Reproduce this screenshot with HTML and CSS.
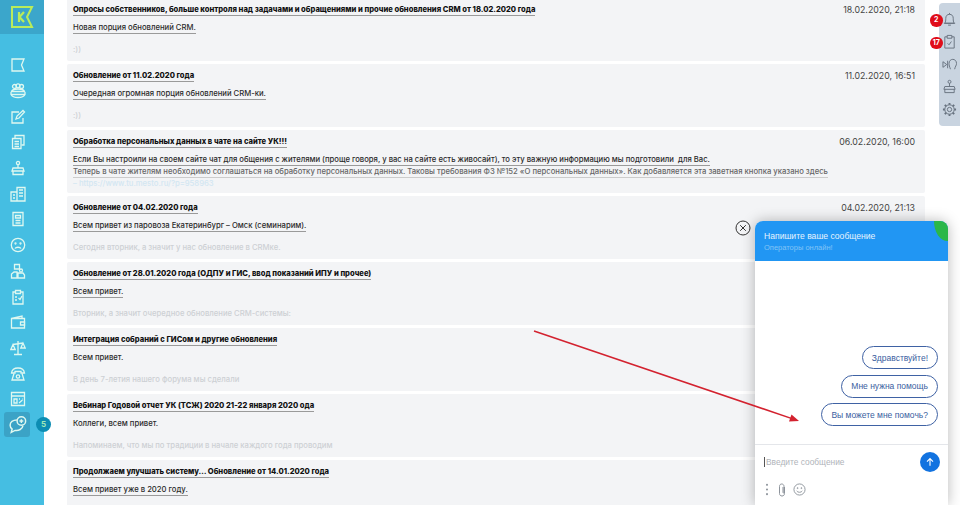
FILE: index.html
```html
<!DOCTYPE html>
<html lang="ru">
<head>
    <meta charset="UTF-8">
    <title>Обновления CRM</title>
    <link rel="stylesheet" href="styles.css">
</head>
<body>
    <nav class="sidebar">
        <div class="logo">
            <svg width="24" height="24" viewBox="0 0 24 24" fill="none" stroke="#b9ec5a" stroke-width="2"><path d="M2 2H22L17 12L22 22H2Z"/><path d="M9 7V17M14 7L9.5 12L14 17" stroke-width="2.2"/></svg>
        </div>
        <div class="menu">
            <a class="menu-item"><svg viewBox="0 0 16 16"><path d="M2 2H14L11.5 8L14 14H2Z"/></svg></a>
            <a class="menu-item"><svg viewBox="0 0 16 16"><circle cx="4.5" cy="3.5" r="2"/><circle cx="11.5" cy="3.5" r="2"/><circle cx="8" cy="2.8" r="2"/><path d="M1.5 8.5C2 6.5 4 6 8 6S14 6.5 14.5 8.5ZM1 9V11.5C3 15.5 13 15.5 15 11.5V9M1 11.5H15"/></svg></a>
            <a class="menu-item"><svg viewBox="0 0 16 16"><path d="M13 9V14H2V3H9"/><path d="M6 10L7 7L13 1.5L14.5 3L9 9Z"/></svg></a>
            <a class="menu-item"><svg viewBox="0 0 16 16"><path d="M5 4V1.5H14V11H11.5"/><path d="M2.5 4.5H11V14.5H2.5Z"/><path d="M4.5 7.5H9M4.5 10H9M4.5 12.5H9"/></svg></a>
            <a class="menu-item"><svg viewBox="0 0 16 16"><circle cx="8" cy="3" r="1.6"/><path d="M8 4.5V8M3 8H13L14 11H2ZM3 11V14.5H13V11"/></svg></a>
            <a class="menu-item"><svg viewBox="0 0 16 16"><path d="M7 1.5H15V15H7ZM1 6H7V15H1Z"/><path d="M9 4H13M9 7H13M9 10H13M3 9H5M3 12H5"/></svg></a>
            <a class="menu-item"><svg viewBox="0 0 16 16"><path d="M3 1.5H13V14.5H3Z"/><path d="M5.5 4.5H10.5V7H5.5ZM5.5 9.5H10.5M5.5 12H10.5"/></svg></a>
            <a class="menu-item"><svg viewBox="0 0 16 16"><circle cx="8" cy="8" r="6.7"/><circle cx="5.5" cy="6.5" r=".5"/><circle cx="10.5" cy="6.5" r=".5"/><path d="M5 11.5C6 9.8 10 9.8 11 11.5"/></svg></a>
            <a class="menu-item"><svg viewBox="0 0 16 16"><path d="M4.5 1.5H9.5V6H4.5ZM1.5 15V11L4 9H7V15ZM8 15V10H13L14.5 12V15Z"/><circle cx="11" cy="7.5" r="1.5"/></svg></a>
            <a class="menu-item"><svg viewBox="0 0 16 16"><path d="M5.5 3H3V15H13V3H10.5"/><path d="M5.5 1.5H10.5V4.5H5.5Z"/><path d="M8.5 9L10 10.5L12 7M5 8H7M5 11H7"/></svg></a>
            <a class="menu-item"><svg viewBox="0 0 16 16"><path d="M1.5 4.5L12 2V4.5M1.5 4.5H14.5V14H1.5Z"/><path d="M10.5 8H14.5V11H10.5Z"/></svg></a>
            <a class="menu-item"><svg viewBox="0 0 16 16"><path d="M8 1V14M4 14.5H12M3 4.5L13 3M3 4.5L.8 9.5H5.2ZM13 3L10.8 8H15.2Z"/></svg></a>
            <a class="menu-item"><svg viewBox="0 0 16 16"><path d="M1.5 7C2 3 5 2 8 2S14 3 14.5 7H11V5.5H5V7Z"/><path d="M4 7.5L2 14H14L12 7.5"/><circle cx="8" cy="10.5" r="1.7"/></svg></a>
            <a class="menu-item"><svg viewBox="0 0 16 16"><path d="M1.5 1.5H14.5V14.5H1.5ZM1.5 5H14.5"/><path d="M4 8H7V12H4ZM9 8H10M12 8H12.5M9 12L12.5 9"/></svg></a>
            <a class="menu-item active">
                <svg viewBox="0 0 16 16"><path d="M7 3.5C3.5 3.5 1 5.5 1 8.2C1 9.6 1.7 10.8 2.8 11.6L2 14.5L5.4 12.8C8.5 13.4 12 11.5 12.4 8.5"/><circle cx="11" cy="4.5" r="3.8"/><path d="M11 2.8V6.2M9.3 4.5H12.7"/></svg>
                <span class="menu-badge">5</span>
            </a>
        </div>
    </nav>

    <main class="news">
        <article class="card">
            <div class="card-head"><h2><span>Опросы собственников, больше контроля над задачами и обращениями и прочие обновления CRM от 18.02.2020 года</span></h2><time>18.02.2020, 21:18</time></div>
            <p><span>Новая порция обновлений CRM.</span></p>
            <p class="faded spaced">:))</p>
        </article>
        <article class="card">
            <div class="card-head"><h2><span>Обновление от 11.02.2020 года</span></h2><time>11.02.2020, 16:51</time></div>
            <p><span>Очередная огромная порция обновлений CRM-ки.</span></p>
            <p class="faded spaced">:))</p>
        </article>
        <article class="card">
            <div class="card-head"><h2><span>Обработка персональных данных в чате на сайте УК!!!</span></h2><time>06.02.2020, 16:00</time></div>
            <p><span>Если Вы настроили на своем сайте чат для общения с жителями (проще говоря, у вас на сайте есть живосайт), то эту важную информацию мы подготовили &nbsp;для Вас.</span></p>
            <p class="second"><span>Теперь в чате жителям необходимо соглашаться на обработку персональных данных. Таковы требования ФЗ №152 «О персональных данных». Как добавляется эта заветная кнопка указано здесь</span></p>
            <p class="link">– https://www.tu.mesto.ru/?p=958963</p>
        </article>
        <article class="card">
            <div class="card-head"><h2><span>Обновление от 04.02.2020 года</span></h2><time>04.02.2020, 21:13</time></div>
            <p><span>Всем привет из паровоза Екатеринбург – Омск (семинарим).</span></p>
            <p class="faded spaced">Сегодня вторник, а значит у нас обновление в CRMке.</p>
        </article>
        <article class="card">
            <div class="card-head"><h2><span>Обновление от 28.01.2020 года (ОДПУ и ГИС, ввод показаний ИПУ и прочее)</span></h2></div>
            <p><span>Всем привет.</span></p>
            <p class="faded spaced">Вторник, а значит очередное обновление CRM-системы:</p>
        </article>
        <article class="card">
            <div class="card-head"><h2><span>Интеграция собраний с ГИСом и другие обновления</span></h2></div>
            <p>Всем привет.</p>
            <p class="faded spaced">В день 7-летия нашего форума мы сделали</p>
        </article>
        <article class="card">
            <div class="card-head"><h2><span>Вебинар Годовой отчет УК (ТСЖ) 2020 21-22 января 2020 ода</span></h2></div>
            <p>Коллеги, всем привет.</p>
            <p class="faded spaced">Напоминаем, что мы по традиции в начале каждого года проводим</p>
        </article>
        <article class="card">
            <div class="card-head"><h2><span>Продолжаем улучшать систему… Обновление от 14.01.2020 года</span></h2></div>
            <p><span>Всем привет уже в 2020 году.</span></p>
        </article>
    </main>

    <aside class="tools">
        <a class="tool"><svg viewBox="0 0 16 16"><path d="M3 12C4 10.5 4 9 4 7C4 4 5.5 2.5 8 2.5S12 4 12 7C12 9 12 10.5 13 12ZM2 12H14M6.5 14H9.5M8 1V2.5"/></svg><b class="tool-badge">2</b></a>
        <a class="tool"><svg viewBox="0 0 16 16"><path d="M5.5 3H3V15H13V3H10.5"/><path d="M5.5 1.5H10.5V4.5H5.5Z"/><path d="M6 10L7.5 11.5L10 8"/></svg><b class="tool-badge">17</b></a>
        <a class="tool"><svg viewBox="0 0 16 16"><path d="M1 5V11L5 8ZM6 4V12"/><path d="M9 13C8 10 7.5 9 7.5 7C7.5 4 9.5 2.5 11.5 2.5S15.5 4 15.5 7C15.5 9 14 10 13.5 13"/></svg></a>
        <a class="tool"><svg viewBox="0 0 16 16"><circle cx="8" cy="3" r="1.6"/><path d="M8 4.5V8M3 8H13L14 11H2ZM3 11V14.5H13V11"/></svg></a>
        <a class="tool"><svg viewBox="0 0 16 16"><circle cx="8" cy="8" r="2.3"/><circle cx="8" cy="8" r="5"/><path d="M8 1V3M8 13V15M1 8H3M13 8H15M3 3L4.5 4.5M11.5 11.5L13 13M13 3L11.5 4.5M4.5 11.5L3 13" stroke-width="2"/></svg></a>
    </aside>

    <button class="chat-close"><svg viewBox="0 0 16 16"><circle cx="8" cy="8" r="7"/><path d="M5.2 5.2L10.8 10.8M10.8 5.2L5.2 10.8"/></svg></button>

    <section class="chat">
        <header class="chat-head">
            <div class="chat-title">Напишите ваше сообщение</div>
            <div class="chat-status">Операторы онлайн!</div>
        </header>
        <div class="chat-body">
            <button class="reply">Здравствуйте!</button>
            <button class="reply">Мне нужна помощь</button>
            <button class="reply">Вы можете мне помочь?</button>
        </div>
        <div class="chat-input">
            <span class="caret"></span><span class="placeholder">Введите сообщение</span>
            <span class="send"><svg viewBox="0 0 16 16"><path d="M8 13V3.5M4 7.5L8 3.5L12 7.5"/></svg></span>
        </div>
        <div class="chat-actions">
            <svg class="dots" viewBox="0 0 4 14"><circle cx="2" cy="2" r="1.1"/><circle cx="2" cy="7" r="1.1"/><circle cx="2" cy="12" r="1.1"/></svg>
            <svg class="clip" viewBox="0 0 10 14"><path d="M7.5 4V10.5C7.5 12 6.5 13 5 13S2.5 12 2.5 10.5V3.5C2.5 2 3.3 1 4.7 1S7 2 7 3.5V9.5C7 10.3 6 10.3 6 9.5V4"/></svg>
            <svg class="smile" viewBox="0 0 14 14"><circle cx="7" cy="7" r="6"/><circle cx="5" cy="5.5" r=".5"/><circle cx="9" cy="5.5" r=".5"/><path d="M4 8.5C5 10.5 9 10.5 10 8.5"/></svg>
        </div>
    </section>

    <svg class="arrow" viewBox="0 0 960 505"><path d="M534 331L792 418.6"/><path class="arrow-head" d="M799 421L789 421.5L791.5 414.5Z"/></svg>
</body>
</html>
```

FILE: styles.css
```css
html, body {
    height: 100%;
}

body {
    margin: 0;
    display: flex;
    overflow: hidden;
    background-color: #fff;
    font-family: 'Inter', 'Noto Sans', sans-serif;
    color: #222;
}

/* left menu */
.sidebar {
    width: 44px;
    flex: none;
    background-color: #45bee2;
}

.logo {
    height: 34px;
    display: flex;
    align-items: center;
    justify-content: center;
    background-color: #3ba6cb;
}

.menu {
    display: flex;
    flex-direction: column;
    padding-top: 18.5px;
}

.menu-item {
    position: relative;
    height: 25.7px;
    display: flex;
    align-items: center;
    justify-content: center;
    padding-right: 9px;
}

.menu-item svg {
    width: 16px;
    height: 16px;
    fill: none;
    stroke: #dff8f0;
    stroke-width: 1.3;
}

.menu-item.active::before {
    content: "";
    position: absolute;
    left: 4px;
    top: 0;
    width: 26px;
    height: 25px;
    border-radius: 3px;
    background-color: #3ba3c6;
}

.menu-item.active svg {
    position: relative;
    width: 18px;
    height: 18px;
}

.menu-badge {
    position: absolute;
    left: 36px;
    top: 5px;
    width: 15px;
    height: 15px;
    border-radius: 50%;
    background-color: #0c8db3;
    color: #9fe8b8;
    font-size: 8px;
    font-weight: 700;
    line-height: 15px;
    text-align: center;
}

/* news list */
.news {
    width: 858px;
    flex: none;
    margin: -2px 0 0 23px;
    display: flex;
    flex-direction: column;
    gap: 3px;
}

.card {
    height: 63px;
    flex: none;
    box-sizing: border-box;
    padding: 6px 10px 0 6px;
    background-color: #f3f4f6;
    border-radius: 2px;
    overflow: hidden;
    font-size: 7.68px;
    line-height: 12px;
}

.card-head {
    display: flex;
    justify-content: space-between;
    margin-bottom: 6px;
}

.card-head h2 {
    margin: 0;
    font-size: 7.58px;
    line-height: 12px;
    font-weight: 800;
    color: #111;
}

.card-head span, .card p span {
    padding-bottom: 1px;
    border-bottom: 1px solid #9a9a9a;
}

.card-head time {
    font-size: 8.8px;
    color: #444;
}

.card p {
    margin: 0;
    font-weight: 500;
    color: #2b2b2b;
    white-space: nowrap;
}

.card p.second {
    color: #666;
}

.card p.second span {
    border-bottom-color: #ccc;
}

.card p.spaced {
    margin-top: 10px;
}

.card p.faded {
    color: #cdd0d4;
}

.card p.link {
    color: #d2e6f2;
}

/* right tools */
.tools {
    position: absolute;
    right: 0;
    top: 3px;
    width: 21px;
    height: 123px;
    padding-top: 5px;
    box-sizing: border-box;
    background-color: #c9d4e0;
    border-radius: 4px 0 0 4px;
}

.tool {
    position: relative;
    height: 22.5px;
    display: flex;
    align-items: center;
    justify-content: center;
}

.tool svg {
    width: 15px;
    height: 15px;
    fill: none;
    stroke: #66717e;
    stroke-width: 1;
}

.tool-badge {
    position: absolute;
    left: -9px;
    top: 6px;
    width: 12.5px;
    height: 12.5px;
    border-radius: 50%;
    background-color: #e00d1a;
    color: #fff;
    font-size: 7px;
    line-height: 12.5px;
    text-align: center;
}

/* chat widget */
.chat-close {
    position: absolute;
    left: 735px;
    top: 220px;
    width: 16px;
    height: 16px;
    padding: 0;
    border: none;
    background: none;
}

.chat-close svg {
    display: block;
    fill: #f3f4f6;
    stroke: #333;
    stroke-width: 1;
}

.chat {
    position: absolute;
    left: 755px;
    top: 221px;
    bottom: 0;
    width: 193px;
    display: flex;
    flex-direction: column;
    background-color: #fff;
    border-radius: 8px 8px 0 0;
    box-shadow: 0 0 14px rgba(0, 0, 0, 0.28);
    font-family: 'Liberation Sans', sans-serif;
}

.chat-head {
    position: relative;
    height: 40px;
    flex: none;
    box-sizing: border-box;
    padding: 9px 9px 0;
    overflow: hidden;
    background-color: #2196f3;
    border-radius: 8px 8px 0 0;
}

.chat-head::after {
    content: "";
    position: absolute;
    right: -13px;
    top: -20px;
    width: 27px;
    height: 40px;
    border-radius: 50%;
    background-color: #2bb749;
}

.chat-title {
    font-size: 8.6px;
    line-height: 13px;
    color: #e6f3fe;
}

.chat-status {
    font-size: 7.5px;
    line-height: 10px;
    color: #82c4f7;
}

.chat-body {
    flex: 1;
    display: flex;
    flex-direction: column;
    align-items: flex-end;
    justify-content: flex-end;
    gap: 5.5px;
    padding: 0 10px 18px;
}

.reply {
    height: 23px;
    padding: 0 9px;
    background: #fff;
    border: 1px solid #3f62a4;
    border-radius: 12px;
    color: #3a5ea0;
    font-family: inherit;
    font-size: 8.5px;
}

.chat-input {
    height: 33px;
    flex: none;
    display: flex;
    align-items: center;
    padding: 0 8px 0 9px;
    border-top: 1px solid #e4e6ea;
}

.caret {
    width: 1px;
    height: 10px;
    margin-right: 1px;
    background-color: #555;
}

.placeholder {
    flex: 1;
    font-size: 8.4px;
    color: #b0b4ba;
}

.send {
    width: 20px;
    height: 20px;
    display: flex;
    align-items: center;
    justify-content: center;
    border-radius: 50%;
    background-color: #1273e0;
}

.send svg {
    width: 12px;
    height: 12px;
    fill: none;
    stroke: #fff;
    stroke-width: 1.5;
}

.chat-actions {
    height: 23px;
    flex: none;
    display: flex;
    align-items: center;
    padding: 0 0 4px 10px;
}

.chat-actions svg {
    fill: none;
    stroke: #8d939b;
    stroke-width: 1;
}

.dots {
    width: 4px;
    height: 13px;
    margin-right: 8px;
}

.chat-actions .dots {
    fill: #8d939b;
    stroke: none;
}

.clip {
    width: 10px;
    height: 14px;
    margin-right: 6px;
}

.smile {
    width: 13px;
    height: 13px;
}

/* annotation over the page */
.arrow {
    position: absolute;
    left: 0;
    top: 0;
    width: 960px;
    height: 505px;
    pointer-events: none;
    fill: none;
    stroke: #d3222f;
    stroke-width: 1.5;
}

.arrow .arrow-head {
    fill: #d3222f;
    stroke: none;
}
```
